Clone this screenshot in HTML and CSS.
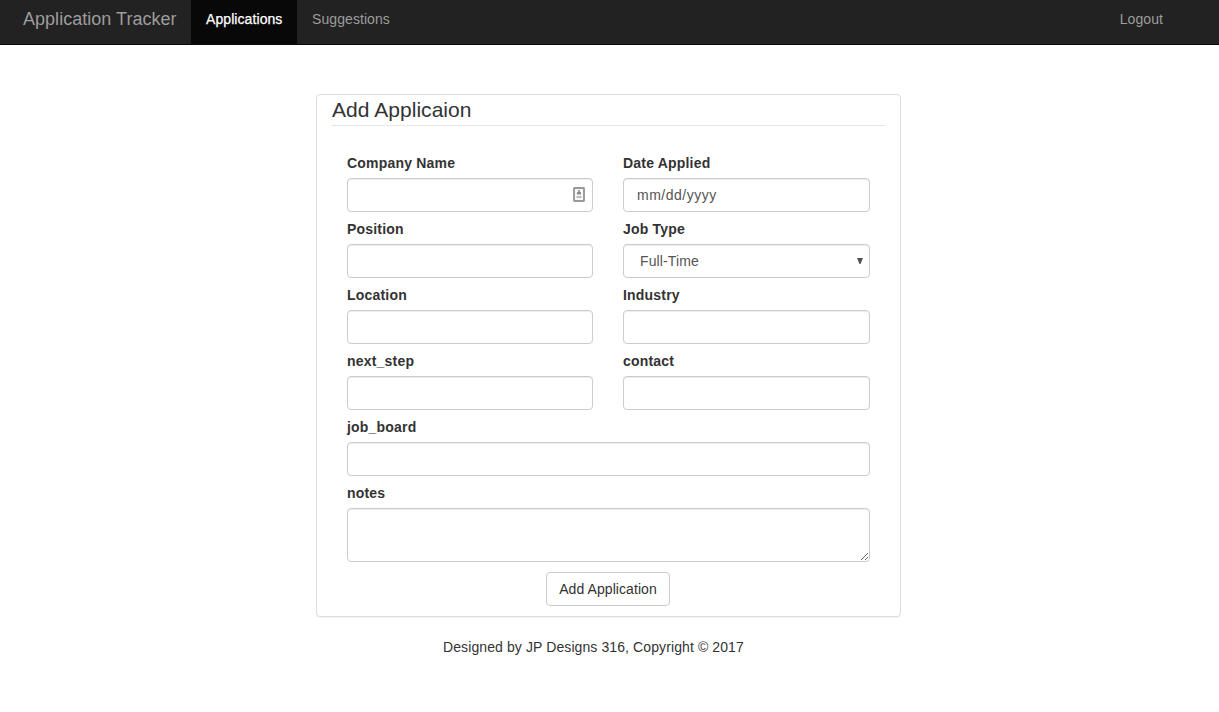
FILE: index.html
```html
<!DOCTYPE html>
<html lang="en">
<head>
<meta charset="utf-8">
<title>Application Tracker</title>
<link rel="stylesheet" href="styles.css">
</head>
<body>
<nav class="navbar">
  <a class="brand">Application Tracker</a>
  <a class="nav-link active">Applications</a>
  <a class="nav-link">Suggestions</a>
  <a class="nav-link logout">Logout</a>
</nav>
<main class="panel">
  <h1 class="title">Add Applicaion</h1>
  <form class="form">
    <div class="field">
      <label class="label" for="company">Company Name</label>
      <div class="control-wrap">
        <input class="control" id="company" type="text">
        <svg class="autofill" width="12" height="15" viewBox="0 0 12 15">
          <rect x="1" y="1" width="10" height="13" rx=".5" fill="#f8f8f8" stroke="#999" stroke-width="1.9"/>
          <path d="M5.2 3h1.6v2H8v2.5H4V5h1.2z" fill="#8c8c8c"/>
          <path d="M3.5 9h5v2h-5z" fill="#bdbdbd"/>
        </svg>
      </div>
    </div>
    <div class="field">
      <label class="label">Date Applied</label>
      <div class="control date">mm/dd/yyyy</div>
    </div>
    <div class="field">
      <label class="label" for="position">Position</label>
      <input class="control" id="position" type="text">
    </div>
    <div class="field">
      <label class="label">Job Type</label>
      <div class="control select"><span>Full-Time</span>
        <svg width="6" height="6" viewBox="0 0 6 6"><path d="M0 0h6L3.5 6h-1z" fill="#505050"/></svg>
      </div>
    </div>
    <div class="field">
      <label class="label" for="location">Location</label>
      <input class="control" id="location" type="text">
    </div>
    <div class="field">
      <label class="label" for="industry">Industry</label>
      <input class="control" id="industry" type="text">
    </div>
    <div class="field">
      <label class="label" for="next">next_step</label>
      <input class="control" id="next" type="text">
    </div>
    <div class="field">
      <label class="label" for="contact">contact</label>
      <input class="control" id="contact" type="text">
    </div>
    <div class="field wide">
      <label class="label" for="board">job_board</label>
      <input class="control" id="board" type="text">
    </div>
    <div class="field wide">
      <label class="label" for="notes">notes</label>
      <textarea class="control notes" id="notes"></textarea>
    </div>
  </form>
  <button class="submit" type="button">Add Application</button>
</main>
<footer class="footer">Designed by JP Designs 316, Copyright © 2017</footer>
</body>
</html>
```
FILE: styles.css
```css
* { box-sizing: border-box; }
body {
  margin: 0;
  background: #fff;
  color: #333;
  font: 14px/20px "Liberation Sans", Arial, sans-serif;
}
.navbar {
  display: flex;
  height: 45px;
  padding-left: 8px;
  background: #222;
  border-bottom: 1px solid #080808;
  color: #9d9d9d;
}
.brand { padding: 9px 15px 0; font-size: 18px; width: 183px; white-space: nowrap; letter-spacing: .03px; }
.nav-link { padding: 9px 15px 0; letter-spacing: .08px; }
.active { width: 106px; background: #080808; color: #fff; -webkit-text-stroke: .25px #fff; }
.logout { margin-left: auto; margin-right: 41px; }
.panel {
  width: 585px;
  height: 523px;
  margin: 49px 0 0 316px;
  padding: 0 15px;
  border: 1px solid #ddd;
  border-radius: 4px;
  box-shadow: 0 1px 1px rgba(0, 0, 0, .05);
}
.title {
  height: 31px;
  margin: 0;
  border-bottom: 1px solid #e5e5e5;
  font-size: 21px;
  font-weight: 400;
  line-height: 30px;
  letter-spacing: .04px;
}
.form {
  display: grid;
  grid-template-columns: 246px 247px;
  column-gap: 30px;
  row-gap: 7px;
  padding: 27px 15px 10px;
}
.field { display: flex; flex-direction: column; gap: 5px; }
.wide { grid-column: span 2; }
.label { font-weight: 700; letter-spacing: .2px; }
.control {
  display: block;
  width: 100%;
  height: 34px;
  margin: 0;
  padding: 6px 13px;
  background: #fff;
  border: 1px solid #ccc;
  border-radius: 4px;
  box-shadow: inset 0 1px 1px rgba(0, 0, 0, .075);
  color: #555;
  font: inherit;
}
.control-wrap { position: relative; }
.autofill { position: absolute; top: 9px; right: 8px; }
.date { letter-spacing: .5px; }
.select { display: flex; align-items: center; justify-content: space-between; padding: 0 6px 0 16px; letter-spacing: .13px; }
.notes { height: 54px; resize: vertical; }
.submit {
  display: block;
  width: 124px;
  height: 34px;
  margin: 0 0 0 214px;
  padding: 6px 0;
  background: #fff;
  border: 1px solid #ccc;
  border-radius: 4px;
  color: #333;
  font: inherit;
  letter-spacing: .08px;
}
.footer { margin: 20px 0 0 443px; letter-spacing: .1px; }
```
